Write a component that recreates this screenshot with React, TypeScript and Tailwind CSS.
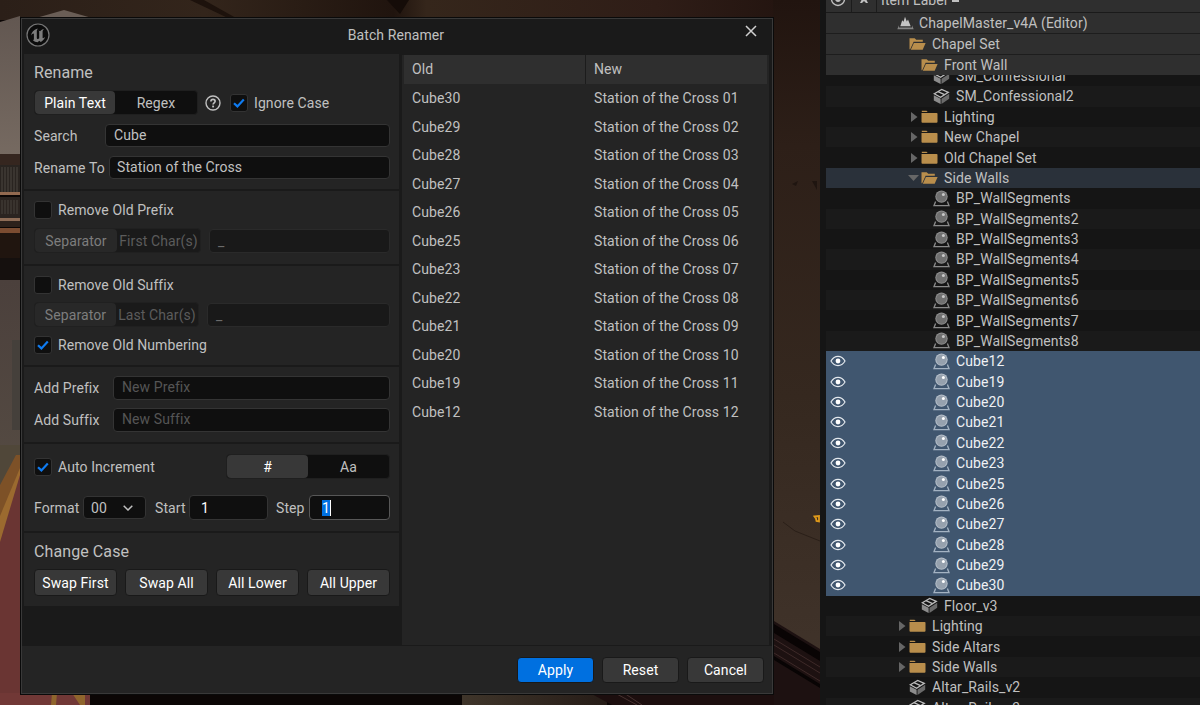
import React from "react";
import clsx from "clsx";

const OLD_NAMES = [30, 29, 28, 27, 26, 25, 23, 22, 21, 20, 19, 12];

const SEPARATOR = "h-[2px] bg-[#1a1a1a]";

type RowKind = "folder" | "open" | "mesh" | "actor";

interface TreeRow {
  label: string;
  kind: RowKind;
  depth: number;
  arrow?: "right" | "down";
  selected?: boolean;
  active?: boolean;
}

const TREE: TreeRow[] = [
  { label: "SM_Confessional2", kind: "mesh", depth: 3 },
  { label: "Lighting", kind: "folder", depth: 2, arrow: "right" },
  { label: "New Chapel", kind: "folder", depth: 2, arrow: "right" },
  { label: "Old Chapel Set", kind: "folder", depth: 2, arrow: "right" },
  { label: "Side Walls", kind: "open", depth: 2, arrow: "down", active: true },
  ...["", "2", "3", "4", "5", "6", "7", "8"].map((n) => ({
    label: `BP_WallSegments${n}`,
    kind: "actor" as RowKind,
    depth: 3,
  })),
  ...[...OLD_NAMES].reverse().map((n) => ({
    label: `Cube${n}`,
    kind: "actor" as RowKind,
    depth: 3,
    selected: true,
  })),
  { label: "Floor_v3", kind: "mesh", depth: 2 },
  { label: "Lighting", kind: "folder", depth: 1, arrow: "right" },
  { label: "Side Altars", kind: "folder", depth: 1, arrow: "right" },
  { label: "Side Walls", kind: "folder", depth: 1, arrow: "right" },
  { label: "Altar_Rails_v2", kind: "mesh", depth: 1 },
  { label: "Altar_Rails_v3", kind: "mesh", depth: 1 },
];

const Scene = () => (
  <svg className="absolute inset-0" width="1200" height="705" viewBox="0 0 1200 705">
    <defs>
      <linearGradient id="wall" x1="0" y1="0" x2="0" y2="1">
        <stop offset="0" stopColor="#21140f" />
        <stop offset="0.22" stopColor="#2d1f18" />
        <stop offset="0.6" stopColor="#35281f" />
        <stop offset="1" stopColor="#40332a" />
      </linearGradient>
      <linearGradient id="stone" x1="0" y1="0" x2="0" y2="1">
        <stop offset="0" stopColor="#625751" />
        <stop offset="1" stopColor="#766a61" />
      </linearGradient>
      <linearGradient id="lower" x1="0" y1="0" x2="0" y2="1">
        <stop offset="0" stopColor="#4b403c" />
        <stop offset="1" stopColor="#544a42" />
      </linearGradient>
      <linearGradient id="beam" x1="0" y1="0" x2="1" y2="0">
        <stop offset="0" stopColor="#2b1f18" />
        <stop offset="0.25" stopColor="#33251b" />
        <stop offset="0.48" stopColor="#20140e" />
        <stop offset="0.52" stopColor="#35261b" />
        <stop offset="0.8" stopColor="#2f1d17" />
        <stop offset="1" stopColor="#20120e" />
      </linearGradient>
      <linearGradient id="floor" x1="0" y1="0" x2="1" y2="0">
        <stop offset="0" stopColor="#3f352a" />
        <stop offset="1" stopColor="#261c17" />
      </linearGradient>
    </defs>
    <rect width="820" height="705" fill="#0b0605" />
    <rect width="820" height="20" fill="url(#beam)" />
    <path d="M190 0l38 18h8L204 0z" fill="#1d120c" />
    <path d="M400 14l9-14h-22z" fill="#150c08" />
    <path d="M36 18l28-8 28 8z" fill="#6a5e56" />
    {/* left strip: stone, organ case, carpet */}
    <path d="M0 22l20-6v140H0z" fill="url(#stone)" />
    <rect y="154" width="20" height="11" fill="#35261f" />
    <rect y="165" width="20" height="30" fill="#292420" />
    <path d="M2 167v25M5 167v25M8 167v25M11 167v25M14 167v25M17 167v25" stroke="#4d4741" />
    <rect y="192" width="20" height="3" fill="#936a50" />
    <rect y="197" width="20" height="21" fill="#2b2420" />
    <path d="M2 200v14M5 200v14M8 200v14M11 200v14M14 200v14M17 200v14" stroke="#49423c" />
    <rect y="218" width="20" height="3" fill="#8e6c56" />
    <rect y="221" width="20" height="6" fill="#2d211b" />
    <rect y="228" width="20" height="5" fill="#7b4c31" />
    <rect y="233" width="20" height="25" fill="#20150f" />
    <rect y="258" width="20" height="22" fill="#15100e" />
    <rect y="280" width="20" height="182" fill="url(#lower)" />
    <path d="M12 340h8v90h-8z" fill="#45403b" />
    <path d="M0 445h20v10L0 500z" fill="#504739" />
    <path d="M0 530l20-68v243H0z" fill="#6a3533" />
    <path d="M0 485l16-30h4v16L0 532z" fill="#7d5127" />
    <path d="M0 516l20-48v7L0 542z" fill="#9b6a2f" />
    {/* bottom strip */}
    <rect y="693" width="90" height="12" fill="#713836" />
    <path d="M52 693h5l-1 12h-5zM72 693h13v12h-5z" fill="#8f652d" />
    <rect x="462" y="693" width="145" height="12" fill="url(#floor)" />
    <path d="M590 693h230v12H612z" fill="#1c0e0e" />
    <path d="M615 693l22 12M624 693l18 12" stroke="#473230" />
    {/* right wall */}
    <rect x="773" width="47" height="660" fill="url(#wall)" />
    <path d="M796 186l-4-2 6-3zM812 181h5v9z" fill="#1f1510" />
    <path d="M783 522l12 9 25 10" stroke="#2a1f18" fill="none" />
    <path d="M774 621l46 28v56h-46z" fill="#1d1111" />
    <path d="M774 624l46 28v9l-46-28z" fill="#090404" />
    <path d="M774 639l46 28M774 645l46 28M774 653l46 28" stroke="#3d2928" />
    <path d="M774 656l46 28v4l-46-28z" fill="#080404" />
    <path d="M814.500 516.500l4.500-.5v5.500l-2.500-.5-.5-2.500z" fill="none" stroke="#e09a1a" strokeWidth="1.800" />
  </svg>
);

const Check = () => (
  <svg width="12" height="12" viewBox="0 0 12 12" fill="none">
    <path d="M1 6.200l3.400 3.200 6.400-6.800" stroke="#0f7bf0" strokeWidth="2.200" />
  </svg>
);

const Checkbox = ({ checked, label }: { checked?: boolean; label: string }) => (
  <div className="flex h-5 items-center">
    <div className="flex size-[18px] items-center justify-center rounded-[3px] border border-[#333] bg-[#0f0f0f]">
      {checked && <Check />}
    </div>
    <span className="ml-[6px]">{label}</span>
  </div>
);

interface FieldProps {
  className?: string;
  dim?: boolean;
  children: React.ReactNode;
}

const Field = ({ className, dim, children }: FieldProps) => (
  <div
    className={clsx(
      "flex items-center rounded-[4px] border",
      dim ? "border-[#2a2a2a] bg-[#191919] text-[#6b6b6b]" : "bg-[#0f0f0f]",
      className
    )}
  >
    {children}
  </div>
);

interface SegmentProps {
  first: string;
  second: string;
  className: string;
  activeClass: string;
  dim?: boolean;
}

const Segment = ({ first, second, className, activeClass, dim }: SegmentProps) => (
  <div
    className={clsx(
      "flex h-[25px] shrink-0 rounded-[4px] border",
      dim ? "border-[#202020] bg-[#1a1a1a] text-[#5c5c5c]" : "border-[#1f1f1f] bg-[#0f0f0f]",
      className
    )}
  >
    <div
      className={clsx(
        "flex items-center justify-center rounded-[4px]",
        dim ? "bg-[#282828] text-[#7d7d7d]" : "bg-[#383838] text-white",
        activeClass
      )}
    >
      {first}
    </div>
    <div className="flex flex-1 items-center justify-center">{second}</div>
  </div>
);

const Button = ({ label, primary, className }: { label: string; primary?: boolean; className: string }) => (
  <button
    className={clsx(
      "flex items-center justify-center rounded-[4px] border border-[#191919] text-white",
      primary ? "bg-[#0070e0]" : "bg-[#383838]",
      className
    )}
  >
    {label}
  </button>
);

const UnrealLogo = () => (
  <svg width="24" height="24" viewBox="0 0 24 24">
    <circle cx="12" cy="12" r="11" fill="#0b0b0b" stroke="#777" strokeWidth="1.200" />
    <path
      d="M11 5.800C8 6.800 5.400 9.400 5 12.600c.8-1.500 1.700-2.200 2.300-2.200.5 0 .6.300.6.800v4.700c0 .8-.4 1-1.100 1 1.300 1.500 3 2.200 4.900 2.300l1.500-1.500 1.600 1.200c2-1 3.700-2.800 4.300-5.100-.9 1-1.500 1.400-2 1.400-.4 0-.5-.3-.5-.7V8.600c0-1 .7-2 1.500-2.600-1.700.4-3.100 1.100-4 2.200-.5-.4-.9-.6-1.600-.5.5.4.7.8.7 1.400v6.100c-.4.500-.8.800-1.300.8-.7 0-1.100-.5-1.100-1.300V8.300c0-1 .3-1.700 1.200-2.500z"
      fill="#7c7c7c"
    />
  </svg>
);

const Help = () => (
  <svg width="16" height="16" viewBox="0 0 16 16" fill="none" stroke="#c0c0c0">
    <circle cx="8" cy="8" r="7" strokeWidth="1.400" />
    <path d="M5.900 6.500c0-1.300.9-2.100 2.100-2.100s2.100.8 2.100 1.900c0 1.500-2 1.600-2 3.200" strokeWidth="1.700" />
    <path d="M8.100 10.600v1.800" strokeWidth="1.900" />
  </svg>
);

const FolderIcon = ({ open }: { open?: boolean }) =>
  open ? (
    <svg width="17" height="14" viewBox="0 0 17 14" fill="#b98e4c">
      <path d="M.5 1.200h5.200l1.500 1.600h6.600v2H4.600L1.200 12.200H.5z" />
      <path d="M4.900 6h11.700l-2.900 6.800H1.800z" />
    </svg>
  ) : (
    <svg width="17" height="14" viewBox="0 0 17 14" fill="#b98e4c">
      <path d="M.8.800h4.700l1.200 1.300H.8z" />
      <path d="M.5 3h15.200c.5 0 .8.300.8.800v8c0 .6-.3 1-.9 1H1.400c-.6 0-.9-.4-.9-1z" />
    </svg>
  );

const MeshIcon = () => (
  <svg width="17" height="17" viewBox="0 0 17 17">
    <path d="M.800 7.200l6.800 3.500v5.300L.800 12.500z" fill="#8c8c8c" />
    <path d="M8.500 10.700l7.700-4.900v5L8.500 16z" fill="#6a6a6a" />
    <path d="M1.300 5.800l7.400-4.300 6.600 2.800-7.700 5z" fill="#161616" stroke="#bcbcbc" strokeWidth="1.300" />
    <path d="M5 3.700l6.600 3" stroke="#bcbcbc" strokeWidth="1.300" />
  </svg>
);

const ActorIcon = ({ selected }: { selected?: boolean }) => (
  <svg width="17" height="17" viewBox="0 0 17 17">
    <path
      d="M2.600 11.600L1 15.700h15l-1.600-4.100"
      fill="none"
      stroke={selected ? "#a3b2c2" : "#8a8a8a"}
      strokeWidth="1.300"
    />
    <circle cx="8.500" cy="6.600" r="6.200" fill={selected ? "#b4bec9" : "#8e8e8e"} />
    <circle cx="8.500" cy="6.600" r="5.200" fill={selected ? "#96a1ae" : "#707070"} />
    <circle cx="10.400" cy="4.600" r="1.500" fill={selected ? "#fff" : "#c8c8c8"} />
  </svg>
);

const Eye = () => (
  <svg width="16" height="12" viewBox="0 0 16 12" fill="none">
    <path d="M1 6c1.700-2.900 4.100-4.600 7-4.600S13.300 3.100 15 6c-1.700 2.900-4.100 4.600-7 4.600S2.700 8.900 1 6z" stroke="#e4e9ee" strokeWidth="1.200" />
    <circle cx="8" cy="6" r="2.400" fill="#fff" />
  </svg>
);

const LevelIcon = () => (
  <svg width="17" height="14" viewBox="0 0 17 14">
    <path d="M3.300 10.300l1.900-6.100 1.300 1.500L8 .8l1.800 4.800 1.200-2.100 2.700 6.800z" fill="#c4c4c4" />
    <path d="M2 9.300L.3 13.300h16.400L15 9.300v2.300H2z" fill="#858585" />
  </svg>
);

const INDENT = ["w-[59px]", "w-[59px]", "w-[71px]", "w-[83px]"];

const OutlinerRow = ({ row, index }: { row: TreeRow; index: number }) => (
  <div
    className={clsx(
      "flex h-[20.390px] shrink-0 items-center",
      row.selected
        ? "bg-[#40566f] text-[#eef1f4]"
        : row.active
          ? "bg-[#2a313a]"
          : index % 2
            ? "bg-[#151515]"
            : "bg-[#1a1a1a]"
    )}
  >
    <div className="w-[24px] shrink-0 pl-1">{row.selected && <Eye />}</div>
    <div className={clsx("flex shrink-0 justify-end pr-[2px]", INDENT[row.depth])}>
      {row.arrow && (
        <svg width="11" height="12" viewBox="0 0 11 12" fill="#666">
          {row.arrow === "right" ? <path d="M3 1l6.500 5L3 11z" /> : <path d="M0 3h11L5.500 9z" />}
        </svg>
      )}
    </div>
    <div className="flex w-[17px] shrink-0 justify-center">
      {row.kind === "mesh" && <MeshIcon />}
      {row.kind === "actor" && <ActorIcon selected={row.selected} />}
      {(row.kind === "folder" || row.kind === "open") && <FolderIcon open={row.kind === "open"} />}
    </div>
    <span className="ml-[6px] whitespace-nowrap">{row.label}</span>
  </div>
);

const Outliner = () => (
  <aside className="ml-[46px] flex h-full w-[380px] flex-col overflow-hidden bg-[#151515] pl-[6px]">
    <div className="flex h-[13px] shrink-0 items-end overflow-hidden border-b border-[#1a1a1a] bg-[#2f2f2f]">
      <div className="flex h-full w-[26px] items-center border-r border-[#1c1c1c] pb-[13px] pl-1">
        <svg width="16" height="16" viewBox="0 0 16 16" fill="none" stroke="#c0c0c0">
          <circle cx="8" cy="8" r="6.500" strokeWidth="1.400" />
          <circle cx="8" cy="8" r="2.500" fill="#c0c0c0" />
        </svg>
      </div>
      <div className="flex h-full w-[25px] items-end justify-center border-r border-[#1c1c1c] pb-[8px]">
        <svg width="8" height="8" viewBox="0 0 8 8" fill="#c0c0c0">
          <path d="M1 0h6L6 3l2 4H6L4 5 2 7H0l2-4z" />
        </svg>
      </div>
      <span className="mb-[4px] ml-[4px] leading-4">Item Label</span>
      <div className="mb-[10px] ml-[5px] h-[2px] w-[7px] bg-[#c0c0c0]" />
    </div>
    <div className="flex h-[62px] shrink-0 flex-col bg-[#2f2f2f]">
      <div className="flex h-[21px] items-center border-b border-[#1d1d1d] pl-[71px]">
        <LevelIcon />
        <span className="ml-[5px]">ChapelMaster_v4A (Editor)</span>
      </div>
      <div className="flex h-[21px] items-center border-b border-[#1d1d1d] pl-[83px]">
        <FolderIcon open />
        <span className="ml-[6px]">Chapel Set</span>
      </div>
      <div className="flex h-[20px] items-center pl-[95px]">
        <FolderIcon open />
        <span className="ml-[6px]">Front Wall</span>
      </div>
    </div>
    <div className="flex h-[11.300px] shrink-0 items-end overflow-hidden">
      <OutlinerRow row={{ label: "SM_Confessional", kind: "mesh", depth: 3 }} index={1} />
    </div>
    {TREE.map((row, i) => (
      <OutlinerRow key={i} row={row} index={i} />
    ))}
  </aside>
);

const RenameForm = () => (
  <div className="w-[375px] shrink-0 bg-[#1a1a1a]">
    <section className="h-[135px] bg-[#242424] pl-[10px] pt-[9px]">
      <h2 className="h-5 text-base leading-5">Rename</h2>
      <div className="mt-[7px] flex h-[25px] items-center">
        <Segment first="Plain Text" second="Regex" className="w-[164px]" activeClass="w-[80px]" />
        <div className="ml-[7px] mr-[9px]">
          <Help />
        </div>
        <Checkbox checked label="Ignore Case" />
      </div>
      <div className="mt-[9px] flex h-[23px] items-center">
        <span className="w-[71px]">Search</span>
        <Field className="h-[23px] w-[285px] border-[#343434] pb-[2px] pl-[8px]">Cube</Field>
      </div>
      <div className="mt-[9px] flex h-[23px] items-center">
        <span className="w-[75px]">Rename To</span>
        <Field className="h-[23px] w-[281px] border-[#343434] pb-[2px] pl-[7px]">Station of the Cross</Field>
      </div>
    </section>
    <div className={SEPARATOR} />
    <section className="h-[73px] bg-[#242424] pl-[10px] pt-[9px]">
      <Checkbox label="Remove Old Prefix" />
      <div className="mt-[8px] flex items-center">
        <Segment dim first="Separator" second="First Char(s)" className="w-[167px]" activeClass="w-[82px]" />
        <Field dim className="ml-[8px] h-[24px] w-[181px] pl-[8px]">_</Field>
      </div>
    </section>
    <div className={SEPARATOR} />
    <section className="h-[99px] bg-[#242424] pl-[10px] pt-[9px]">
      <Checkbox label="Remove Old Suffix" />
      <div className="mt-[7px] flex items-center">
        <Segment dim first="Separator" second="Last Char(s)" className="w-[165px]" activeClass="w-[81px]" />
        <Field dim className="ml-[8px] h-[24px] w-[183px] pl-[8px]">_</Field>
      </div>
      <div className="mt-[8px]">
        <Checkbox checked label="Remove Old Numbering" />
      </div>
    </section>
    <div className={SEPARATOR} />
    <section className="h-[75px] bg-[#242424] pl-[10px] pt-[9px]">
      <div className="flex h-[24px] items-center">
        <span className="w-[79px]">Add Prefix</span>
        <Field className="h-[24px] w-[277px] border-[#343434] pb-[2px] pl-[8px] text-[#555]">New Prefix</Field>
      </div>
      <div className="mt-[8px] flex h-[24px] items-center">
        <span className="w-[79px]">Add Suffix</span>
        <Field className="h-[24px] w-[277px] border-[#343434] pb-[2px] pl-[8px] text-[#555]">New Suffix</Field>
      </div>
    </section>
    <div className={SEPARATOR} />
    <section className="h-[87px] bg-[#242424] pl-[10px] pt-[10px]">
      <div className="flex h-[25px] items-center">
        <div className="w-[192px]">
          <Checkbox checked label="Auto Increment" />
        </div>
        <Segment first="#" second="Aa" className="w-[164px]" activeClass="w-[81px]" />
      </div>
      <div className="mt-[16px] flex h-[25px] items-center">
        <span className="w-[49px]">Format</span>
        <Field className="h-[23px] w-[63px] border-[#343434] pl-[7px]">
          00
          <svg className="ml-[16px]" width="10" height="6" viewBox="0 0 10 6" fill="none">
            <path d="M.7.7L5 5 9.300.7" stroke="#c0c0c0" strokeWidth="1.500" />
          </svg>
        </Field>
        <span className="ml-[9px] w-[34px]">Start</span>
        <Field className="h-[25px] w-[79px] border-[#343434] pl-[11px] text-white">1</Field>
        <span className="ml-[8px] w-[33px]">Step</span>
        <Field className="h-[25px] w-[81px] border-[#575757] pl-[12px] text-white">
          <span className="h-[16px] border-r border-white bg-[#0070e0] leading-[16px]">1</span>
        </Field>
      </div>
    </section>
    <div className={SEPARATOR} />
    <section className="h-[73px] bg-[#242424] pl-[10px] pt-[9px]">
      <h2 className="h-5 text-base leading-5">Change Case</h2>
      <div className="mt-[7px] flex gap-[8px]">
        <Button className="h-[27px] w-[83px]" label="Swap First" />
        <Button className="h-[27px] w-[83px]" label="Swap All" />
        <Button className="h-[27px] w-[83px]" label="All Lower" />
        <Button className="h-[27px] w-[83px]" label="All Upper" />
      </div>
    </section>
  </div>
);

const PreviewTable = () => (
  <div className="ml-[2px] flex-1 border border-[#1a1a1a] bg-[#242424] pl-[2px] pr-[2px]">
    <div className="flex h-[29px] items-center bg-[#2f2f2f]">
      <div className="flex h-full w-[182px] items-center border-r border-[#1c1c1c] pb-px pl-[8px]">Old</div>
      <div className="pb-px pl-[8px]">New</div>
    </div>
    {OLD_NAMES.map((n, i) => (
      <div key={n} className="flex h-[28.500px] items-center">
        <div className="w-[182px] pl-[8px]">Cube{n}</div>
        <div className="pl-[8px]">Station of the Cross {String(i + 1).padStart(2, "0")}</div>
      </div>
    ))}
  </div>
);

const BatchRenamer = () => (
  <div className="ml-5 mt-[17px] flex h-[678px] w-[754px] shrink-0 flex-col border border-[#0a0a0a] bg-[#1a1a1a]">
    <div className="flex flex-1 flex-col border border-[#393939]">
      <header className="flex h-[35px] shrink-0 items-center pb-[3px] pl-[4px]">
        <UnrealLogo />
        <span className="ml-[4px] flex-1 pr-[7px] text-center">Batch Renamer</span>
        <svg className="mb-[9px] mr-[15px]" width="12" height="12" viewBox="0 0 12 12">
          <path d="M1 1l10 10M11 1L1 11" stroke="#d0d0d0" strokeWidth="1.500" />
        </svg>
      </header>
      <div className="flex h-[592px] pl-[2px] pr-[2px]">
        <RenameForm />
        <PreviewTable />
      </div>
      <footer className="flex flex-1 items-center justify-end gap-[8px] bg-[#242424] pr-[8px]">
        <Button primary className="h-[26px] w-[77px]" label="Apply" />
        <Button className="h-[26px] w-[77px]" label="Reset" />
        <Button className="h-[26px] w-[77px]" label="Cancel" />
      </footer>
    </div>
  </div>
);

const App = () => {
  return (
    <div className="relative h-[705px] w-[1200px] overflow-hidden bg-[#0b0605] font-['Roboto',sans-serif] text-[14px] leading-[18px] tracking-[0.09px] text-[#c0c0c0]">
      <Scene />
      <main className="relative flex h-full items-start">
        <BatchRenamer />
        <Outliner />
      </main>
    </div>
  );
};

export default App;
